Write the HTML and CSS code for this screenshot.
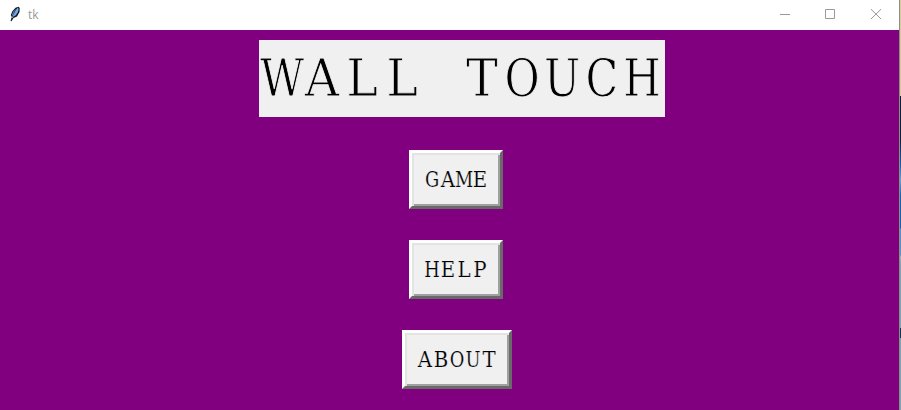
FILE: index.html
```html
<!DOCTYPE html>
<html lang="en">
<head>
<meta charset="utf-8">
<title>tk</title>
<link rel="stylesheet" href="styles.css">
</head>
<body>
<div class="window">
  <header class="titlebar">
    <svg class="feather" width="12" height="16" viewBox="0 0 12 16">
      <path d="M9.5 .7 10.7 2 10.5 6 8 10.5 4.5 12 2.5 15.3 1.5 15 2.8 11 1.8 9 3.5 5 6.5 1.8Z" fill="#101820"/>
      <path d="M8.8 1.6 9.6 3 9 6 6.8 9.2 4.2 10.7 6 7 7.5 4Z" fill="#6faaf0"/>
      <path d="M7.6 2.2 4.6 5 2.9 8.5 3.5 9.9 5.3 6Z" fill="#4a80c4"/>
      <path d="M8.5 2.5 5.8 6.7 3.2 12" fill="none" stroke="#b9d8fa" stroke-width=".7"/>
    </svg>
    <span class="caption">tk</span>
    <svg class="control" width="46" height="30" viewBox="0 0 46 30"><path d="M18 14.5H28"/></svg>
    <svg class="control" width="45" height="30" viewBox="0 0 45 30"><path d="M17.5 9.5H26.5V18.5H17.5Z"/></svg>
    <svg class="control" width="46" height="30" viewBox="0 0 46 30"><path d="M18 9.2 28 19M28 9.2 18 19"/></svg>
  </header>
  <main class="content">
    <h1 class="title"><svg width="406" height="77"><text y="56" x="25.56 70 114.44 158.89 203.33 247.78 292.22 336.67 381.11 425.56"><tspan class="narrow">W</tspan>ALL T<tspan class="narrow">OUCH</tspan></text></svg></h1>
    <button class="button"><svg width="88" height="53"><text y="34" x="22.22 40 57.78 75.56"><tspan class="narrow">G</tspan>A<tspan class="narrow">M</tspan>E</text></svg></button>
    <button class="button"><svg width="88" height="53"><text y="34" x="22.22 40 57.78 75.56"><tspan class="narrow">H</tspan>ELP</text></svg></button>
    <button class="button about"><svg width="104" height="53"><text y="34" x="22.22 40 57.78 75.56 93.33">AB<tspan class="narrow">OU</tspan>T</text></svg></button>
  </main>
</div>
<div class="desktop"></div>
</body>
</html>
```
FILE: styles.css
```css
body {
  margin: 0;
  display: flex;
  height: 410px;
  overflow: hidden;
}
.window {
  width: 899px;
  display: flex;
  flex-direction: column;
}
.titlebar {
  height: 30px;
  display: flex;
  align-items: center;
  background: #fff;
}
.feather { margin: 0 7px 2px 9px; }
.caption {
  flex: 1;
  font: 12px/30px "Open Sans", sans-serif;
  color: #999;
}
.control { fill: none; stroke: #999; stroke-width: 1; }
.content {
  flex: 1;
  display: flex;
  flex-direction: column;
  align-items: center;
  background: #800080;
  padding: 10px 0 0 13px;
}
.title, .button {
  font-family: "DejaVu Serif", serif;
  font-weight: 400;
  color: #000;
  background: #f0f0f0;
}
svg { display: block; }
text {
  fill: #000;
  stroke: #f0f0f0;
  stroke-width: .2px;
  text-anchor: middle;
  transform: scaleX(.9);
}
.narrow { font-family: "DejaVu Serif Condensed", "DejaVu Serif", serif; }
.title {
  margin: 0 0 33px 12px;
  width: 406px;
  height: 77px;
  font-size: 53px;
}
.title text { stroke-width: .9px; }
.button {
  box-sizing: border-box;
  width: 94px;
  height: 59px;
  margin: 0 0 31px;
  padding: 0;
  border: 3px solid;
  border-color: #fff #696969 #696969 #fff;
  box-shadow: inset 2px 2px #e3e3e3, inset -2px -2px #a0a0a0;
  font-size: 22px;
}
.button.about { width: 110px; margin-left: 1px; }
.desktop {
  width: 2px;
  border-left: 1px solid #8d8f83;
  box-sizing: border-box;
  background: linear-gradient(#d8cc9c 0 96px, #06243f 96px 140px, #0868b0 165px, #58a8d0 180px, #0868b8 195px 228px, #4898c8 229px 255px, #a8b8b8 257px, #78a8b8 262px 328px, #083858 328px 338px, #78a8b8 338px);
}
```
